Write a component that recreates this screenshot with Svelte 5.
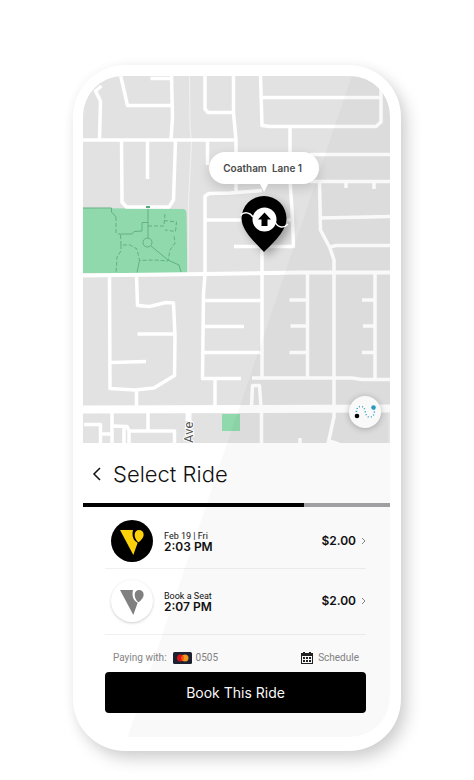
<script lang="ts">
  interface Ride {
    label: string;
    time: string;
    price: string;
    featured: boolean;
  }

  const rides: Ride[] = [
    { label: 'Feb 19 | Fri', time: '2:03 PM', price: '$2.00', featured: true },
    { label: 'Book a Seat', time: '2:07 PM', price: '$2.00', featured: false },
  ];

  const progress = 72;

  // Residential streets
  const streets = [
    'M83 140H236',
    'M101.500 86L95.500 91L100.500 101L99.500 140',
    'M120.500 75L127.500 105.500H171',
    'M150.500 78.500H171',
    'M171.500 75L172.500 118L171 140',
    'M205 75V109L208 112.500H234',
    'M233.500 75V113L236 140V192',
    'M121.500 140L122 202L126.500 207H169L173.500 200L175.500 140',
    'M147.500 141V179',
    'M207.500 141V165',
    'M262 190.500L230 193L209 193.500L205 196V275L203.500 293L202.500 378.500H241',
    'M205 220H292',
    'M234 246.500H293.500L292 210L290 181',
    'M260.500 75L262 125.500L270 126.500H376L381 122V80',
    'M262 97.500H381',
    'M290 127V160',
    'M310 154.500H392',
    'M310 181.500H392M346 181V188M374 181V189',
    'M319.500 181L320.500 230L330 248L334 260V417L328 444',
    'M320.500 218L392 216.500',
    'M330 247L336 245.500H392',
    'M262 250V377',
    'M204 300.500H262M204 326.500H244M204 352.500H262',
    'M252 378H352L362 379.500H392',
    'M307.500 273V377M375 273V378',
    'M289.500 300H307M290.500 326H307M289.500 352.500H307',
    'M362 300H375M363 326H375M362 352.500H375',
    'M251.500 407L252.500 385.500H259.500L261 407',
    'M261.500 412V444M300 438V444',
    'M109.500 276L110 388.500L135 390L154 388L174.500 375.500L175 336L173.500 303L166 302.500L149.500 306.500L137.500 305.500L136.500 276',
    'M137.500 334H174M111 362.500L146 361.500M136.500 390V406M215 379V406',
    'M84 424.500H100.500V444M112 413V444M101 434H112',
    'M112 426L127 426.500L129 431H174.500V444M129 430V444M124 427V444M148 413V431',
    'M329 441L339 444',
  ];

  const footpaths = [
    'M83 208H111.500V212L116 217',
    'M148 207V238M118 234H132L134 231.500L142 231V222.500H148',
    'M151 246L168 260L179 265L181 272',
    'M139.500 260.500L137 272.500',
  ];

  const trails = [
    'M116 217V233',
    'M120.500 235L121 245H130L137 249L139.500 260.500L154 260L168 261L170 250L175 243L174 236',
    'M121 245V251L117 257L116 273',
    'M148 226H164L165 213',
    'M164 220.500L176.500 222L175.500 231.500L165 230',
  ];
</script>

<main class="page">
  <div class="phone">
    <div class="screen">
      <section class="map" aria-label="Pickup map">
        <svg class="map-svg" viewBox="83 76 307 367" fill="none">
          <rect x="83" y="76" width="307" height="367" fill="#e2e2e3" />

          <!-- Parks -->
          <path d="M83 208L183 209Q186 209 186.500 213L187.500 273H83Z" fill="#8fd9ac" />
          <rect x="222" y="414" width="18" height="17" fill="#8fd9ac" />
          {#each footpaths as d}
            <path {d} class="footpath" />
          {/each}
          {#each trails as d}
            <path {d} class="footpath trail" />
          {/each}
          <circle cx="147.500" cy="242.500" r="4.500" class="footpath" />

          <path d="M189.500 76L190 126L191.500 143L188.500 200L188 273M389 413V443" class="lane" />
          {#each streets as d}
            <path {d} class="street" />
          {/each}
          <path d="M83 275.500L205 274L300 272.500H390" class="street avenue" />
          <path d="M83 409.500L390 408.500" class="street highway" />
          <path d="M188.500 409V421" class="street side-road" />
          <rect x="146" y="206" width="4" height="2" fill="#58aa78" />
          <text class="road-name" transform="translate(193 443) rotate(-90)">Ave</text>
        </svg>
        <svg class="map-svg overlay" viewBox="83 76 307 367" fill="none">
          <path class="pin-shadow" d="M264 252C256 243 241.500 231 241.500 218.500A22.500 22.500 0 0 1 286.500 218.500C286.500 231 273 243 264 252Z" />
          <path d="M264 252C256 243 241.500 231 241.500 218.500A22.500 22.500 0 0 1 286.500 218.500C286.500 231 273 243 264 252Z" fill="#000" />
          <path d="M240.500 215.500C244 211.500 250 212 253 217M275 222C278 228 284 228.500 288 224" stroke="#fff" stroke-width="1.500" />
          <circle cx="264.500" cy="219.500" r="12" fill="#fff" />
          <path d="M264.500 212.500L271 219.500H267.500V226H261.500V219.500H258Z" fill="#000" />
        </svg>
        <div class="bubble">Coatham&nbsp; Lane 1</div>
        <button class="route-btn" aria-label="Show route">
          <svg viewBox="0 0 32 32" fill="none">
            <path d="M7.500 19C7 14 8 10.500 12 10.500C18 10.500 14.500 21 20.500 21C25 21 26 17 25 12" class="route-line" />
            <circle cx="8" cy="20" r="2.300" fill="#000" />
            <circle cx="24.500" cy="11.500" r="2.300" fill="#2a9fc6" />
          </svg>
        </button>
      </section>

      <section class="sheet">
        <header class="sheet-header">
          <button class="back" aria-label="Back">
            <svg viewBox="0 0 9 14" fill="none">
              <path d="M8 1L2 7L8 13" stroke="#111" stroke-width="1.500" />
            </svg>
          </button>
          <h1>Select Ride</h1>
        </header>

        <div class="progress">
          <div class="progress-fill" style="width: {progress}%"></div>
        </div>

        <div class="rides">
          {#each rides as ride}
            <button class="ride">
              <span class="avatar" class:featured={ride.featured}>
                <svg viewBox="0 0 126 126">
                  <path d="M27 30H66C62 47 66 61 80 68L67 105Z" />
                  <path d="M84 30C92 30 98 36 98 44C98 53 89 62 82 67C75 60 71 53 71 44C71 36 77 30 84 30Z" />
                </svg>
              </span>
              <span class="ride-info">
                <span class="ride-label">{ride.label}</span>
                <span class="ride-time">{ride.time}</span>
              </span>
              <span class="price">{ride.price}</span>
              <svg class="chevron" viewBox="0 0 5 8" fill="none">
                <path d="M1 1L4 4L1 7" stroke="#8a8a8a" />
              </svg>
            </button>
          {/each}
        </div>

        <div class="payment">
          <span>Paying with:</span>
          <svg class="card" viewBox="0 0 19 12">
            <rect width="19" height="12" rx="1.500" fill="#1d2233" />
            <circle cx="7.500" cy="6" r="3.500" fill="#e0141b" />
            <circle cx="12" cy="6" r="3.500" fill="#f59a1d" />
            <path d="M9.750 3.300A3.500 3.500 0 0 1 9.750 8.700A3.500 3.500 0 0 1 9.750 3.300Z" fill="#fa5a12" />
          </svg>
          <span>0505</span>
          <button class="schedule">
            <svg viewBox="0 0 12 12">
              <path d="M0 1H2V0H4V1H8V0H10V1H12V12H0ZM1 4V11H11V4Z" fill="#222" fill-rule="evenodd" />
              <path d="M2 5H4V7H2ZM5 5H7V7H5ZM8 5H10V7H8ZM2 8H4V10H2ZM5 8H7V10H5ZM8 8H10V10H8Z" fill="#222" />
            </svg>
            Schedule
          </button>
        </div>

        <button class="book">Book This Ride</button>
      </section>

      <div class="glare"></div>
    </div>
  </div>
</main>

<style>
  :global(body) {
    margin: 0;
    background: #fff;
  }

  .page {
    padding: 65px 73px 28px;
    font-family: Inter, 'Liberation Sans', sans-serif;
    color: #111;
  }

  button {
    padding: 0;
    border: none;
    background: none;
    font-family: inherit;
    color: inherit;
    cursor: pointer;
  }

  svg {
    display: block;
  }

  .phone {
    padding: 11px 11px 14px 10px;
    border-radius: 52px;
    background: #fff;
    box-shadow:
      6px 8px 16px rgb(0 0 0 / 0.18),
      0 0 12px rgb(0 0 0 / 0.03);
  }

  .screen {
    position: relative;
    overflow: hidden;
    border-radius: 40px;
  }

  .glare {
    position: absolute;
    inset: 0;
    background: rgb(0 0 0 / 0.025);
    clip-path: polygon(87.5% 0, 100% 0, 100% 100%, 14.5% 100%);
    pointer-events: none;
  }

  .map {
    position: relative;
  }

  .map-svg {
    width: 100%;
    height: auto;
  }

  .overlay {
    position: absolute;
    inset: 0;
  }

  .street {
    stroke: #fff;
    stroke-width: 3.5;
    stroke-linejoin: round;
  }

  .avenue {
    stroke-width: 4;
  }

  .side-road {
    stroke-width: 6;
  }

  .highway {
    stroke-width: 8;
  }

  .lane {
    stroke: #f1f1f2;
    stroke-width: 1;
  }

  .footpath {
    stroke: #62b182;
    stroke-width: 1;
  }

  .trail {
    stroke-dasharray: 4 2;
  }

  .road-name {
    font-family: Roboto, sans-serif;
    font-size: 13px;
    fill: #555;
    stroke: #fff;
    stroke-width: 2;
    paint-order: stroke;
  }

  .pin-shadow {
    fill: rgb(0 0 0 / 0.3);
    filter: blur(4px);
    transform: translate(4px, 4px);
  }

  .bubble {
    position: absolute;
    top: 76px;
    left: 59%;
    padding: 0 17px 0 14px;
    border-radius: 16px;
    transform: translateX(-50%);
    background: #fff;
    box-shadow: 0 4px 12px rgb(0 0 0 / 0.15);
    font-size: 10px;
    font-weight: 600;
    line-height: 32px;
    white-space: nowrap;
    color: #4a4a4a;
  }

  .bubble::after {
    content: '';
    position: absolute;
    top: 100%;
    left: 50%;
    border: 4px solid transparent;
    border-top: 8px solid #fff;
    border-bottom: none;
    transform: translateX(-50%);
  }

  .route-btn {
    position: absolute;
    right: 9px;
    bottom: 15px;
    width: 32px;
    height: 32px;
    border-radius: 50%;
    background: #fff;
    box-shadow: 0 1px 6px rgb(0 0 0 / 0.25);
  }

  .route-line {
    stroke: #2a9fc6;
    stroke-width: 1.5;
    stroke-dasharray: 1 2;
  }

  .sheet {
    padding-bottom: 24px;
    background: #fff;
  }

  .sheet-header {
    display: flex;
    align-items: center;
    gap: 12px;
    height: 60px;
    padding: 2px 9px 0;
    box-sizing: border-box;
  }

  .back svg {
    width: 9px;
    height: 14px;
  }

  h1 {
    margin: 0;
    font-size: 22px;
    font-weight: 300;
    line-height: 28px;
  }

  .progress {
    height: 4px;
    background: #a3a3a5;
  }

  .progress-fill {
    height: 100%;
    background: #000;
  }

  .rides {
    padding: 6px 24px 0 22px;
  }

  .ride {
    display: flex;
    align-items: center;
    width: 100%;
    height: 56px;
    padding: 0 0 0 6px;
    border-bottom: 1px solid #f0f0f0;
    text-align: left;
  }

  .ride:last-child {
    height: 66px;
    padding-bottom: 2px;
  }

  .avatar {
    width: 42px;
    height: 42px;
    margin-right: 11px;
    border-radius: 50%;
    background: #fff;
    box-shadow: 0 1px 3px rgb(0 0 0 / 0.2);
    fill: #808080;
  }

  .avatar.featured {
    background: #000;
    box-shadow: none;
    fill: #fdd20a;
  }

  .ride-info {
    display: flex;
    flex: 1;
    flex-direction: column;
    padding-top: 2px;
  }

  .ride-label {
    font-family: Roboto, sans-serif;
    font-size: 9px;
    line-height: 10px;
  }

  .ride-time {
    font-size: 12px;
    font-weight: 600;
    line-height: 12px;
  }

  .price {
    margin-right: 5px;
    font-size: 12px;
    font-weight: 600;
  }

  .chevron {
    width: 5px;
    height: 8px;
  }

  .payment {
    display: flex;
    align-items: center;
    box-sizing: border-box;
    height: 37px;
    padding: 8px 31px 0 30px;
    font-family: Roboto, sans-serif;
    font-size: 10px;
    color: #858585;
  }

  .card {
    width: 19px;
    height: 12px;
    margin: 0 4px 0 6px;
  }

  .schedule {
    display: flex;
    align-items: center;
    gap: 5px;
    margin-left: auto;
    font-size: 10px;
  }

  .schedule svg {
    width: 12px;
    height: 12px;
  }

  .book {
    display: block;
    width: calc(100% - 46px);
    margin: 0 24px 0 22px;
    border-radius: 4px;
    background: #000;
    font-size: 14px;
    line-height: 41px;
    color: #fff;
  }
</style>
